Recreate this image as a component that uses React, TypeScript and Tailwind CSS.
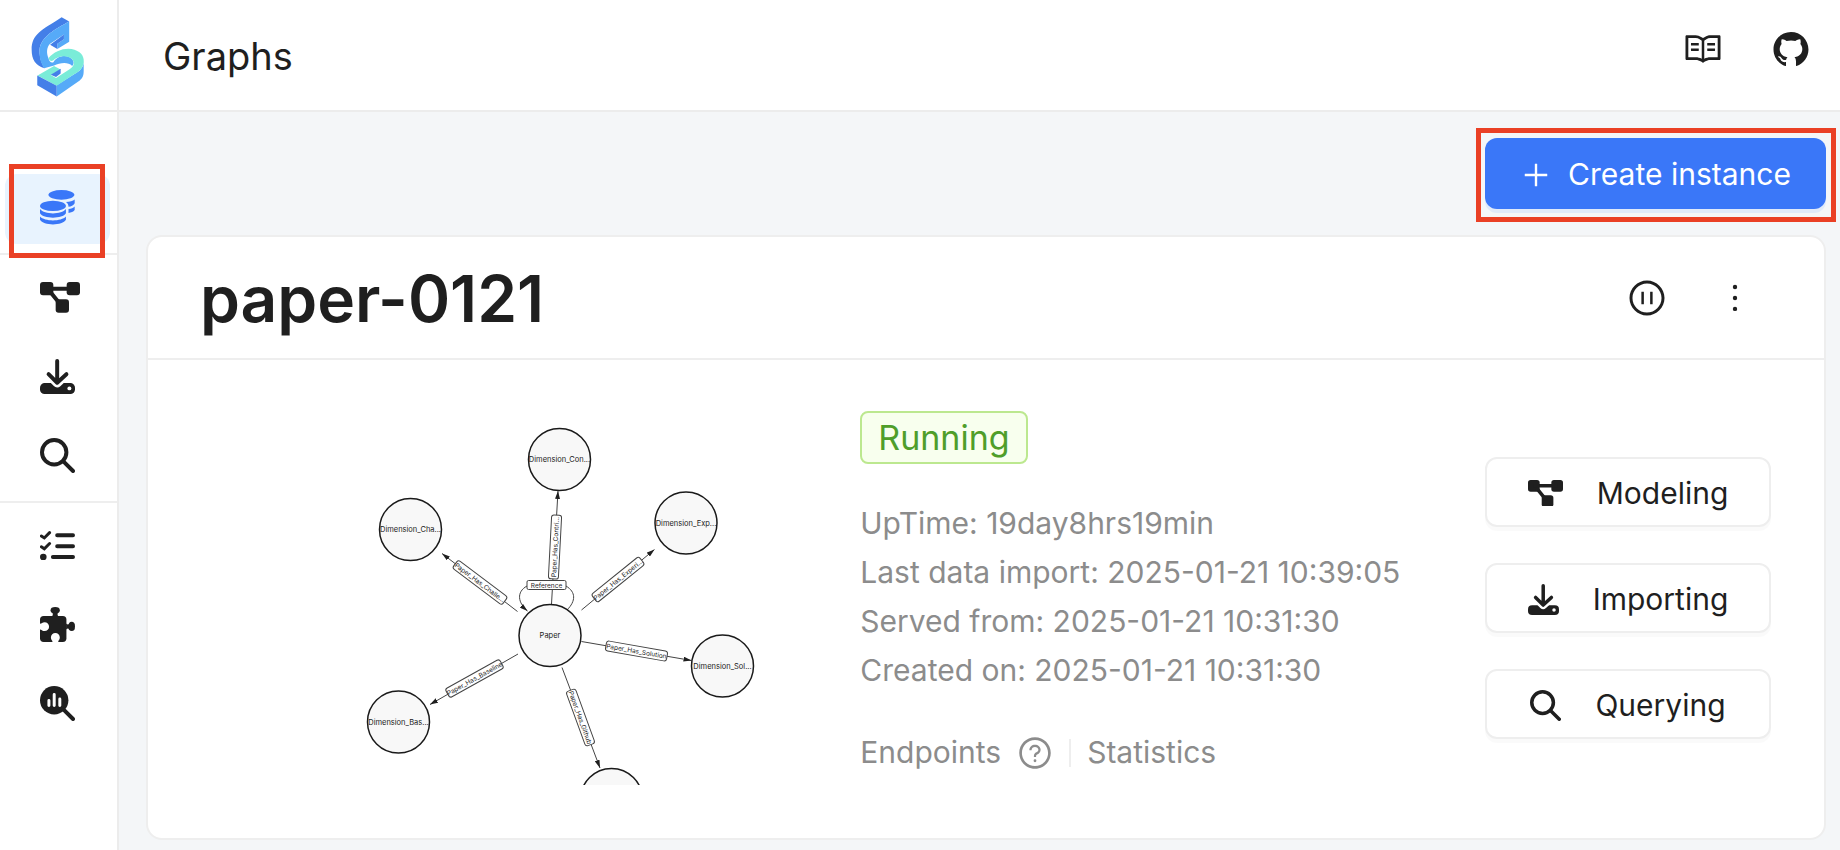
import type { ReactNode } from "react";
import {
  AiFillGithub,
  AiOutlineMore,
  AiOutlinePauseCircle,
  AiOutlinePlus,
  AiOutlineQuestionCircle,
  AiOutlineRead,
} from "react-icons/ai";

function Logo() {
  return (
    <svg viewBox="8 8 164 248" className="h-[82px] w-[54px]" aria-hidden="true">
      <path fill="#447fe8" d="M101 11 124 24 C85 45 37 70 34 110 C33 140 44 156 48 166 C22 158 10 140 10 110 C10 62 38 52 101 11Z" />
      <path fill="#56aaf8" d="M124 24V86L88 108V92L108 78V64L66 92C56 102 54 118 61 136C64 148 70 150 76 148C88 126 120 124 132 138C140 146 138 154 133 159C120 146 95 150 78 158L48 166C38 150 33 136 34 110C37 70 85 45 124 24Z" />
      <path fill="#447fe8" d="M108 64V78L88 92V108L66 95Z" />
      <path fill="#56aaf8" d="M86 218 140 184C158 175 168 162 168 146V174C168 190 164 197 156 203L86 252Z" />
      <path fill="#7aecd8" d="M61 136C80 112 115 102 140 110C165 118 170 136 168 150C164 170 150 178 140 184L86 219L28 188L78 159L98 170L68 187L84 196L124 170C140 160 142 148 132 138C118 124 88 128 75 143C68 146 64 142 61 136Z" />
      <path fill="#447fe8" d="M98 168V182L84 193L68 186ZM27 188 86 219V252L27 218Z" />
    </svg>
  );
}

function CoinsIcon({ className }: { className: string }) {
  return (
    <svg viewBox="0 0 108 108" className={className} fill="currentColor" aria-hidden="true">
      <ellipse cx="66" cy="15" rx="40" ry="15" />
      <ellipse cx="40" cy="49" rx="40" ry="16" />
      <path d="M0 59C14 77 66 77 80 59V72C70 90 10 90 0 72ZM0 82C14 98 66 98 80 82V92C70 111 10 111 0 92Z" />
      <path d="M80 37C92 36 102 34 107 29V41C103 48 96 51 88 52C88 46 86 41 80 37ZM88 59C96 58 103 55 107 51V62C103 68 96 70 88 71Z" />
    </svg>
  );
}

function ModelIcon({ className }: { className: string }) {
  return (
    <svg viewBox="0 0 120 92" className={className} fill="currentColor" aria-hidden="true">
      <rect width="40" height="40" rx="9" />
      <rect x="80" width="40" height="40" rx="9" />
      <rect x="47" y="52" width="40" height="40" rx="9" />
      <path d="M20 20H100M28 26 62 68" stroke="currentColor" strokeWidth="12" />
    </svg>
  );
}

function ImportIcon({ className }: { className: string }) {
  return (
    <svg viewBox="0 0 106 106" className={className} fill="none" strokeLinecap="round" strokeLinejoin="round" aria-hidden="true">
      <rect y="73" width="106" height="33" rx="14" fill="currentColor" />
      <path d="M26 46 52 72 80 46" stroke="white" strokeWidth="28" />
      <path d="M52 6V70M26 46 52 72 80 46" stroke="currentColor" strokeWidth="12" />
      <circle cx="89" cy="89" r="6" fill="white" />
    </svg>
  );
}

function SearchIcon({ className }: { className: string }) {
  return (
    <svg viewBox="0 0 106 106" className={className} fill="none" stroke="currentColor" strokeLinecap="round" aria-hidden="true">
      <circle cx="43" cy="43" r="37" strokeWidth="12" />
      <path d="M70 70 100 100" strokeWidth="12" />
    </svg>
  );
}

function TasksIcon({ className }: { className: string }) {
  return (
    <svg viewBox="0 0 106 88" className={className} fill="none" stroke="currentColor" strokeLinecap="round" aria-hidden="true">
      <path d="M52 13H100M52 46H100M39 79H100" strokeWidth="12" />
      <path d="M4 15 13 21 29 5M4 48 13 54 29 38" strokeWidth="9" />
      <circle cx="10" cy="79" r="10" fill="currentColor" stroke="none" />
    </svg>
  );
}

function PuzzleIcon({ className }: { className: string }) {
  return (
    <svg viewBox="0 0 106 106" className={className} fill="currentColor" aria-hidden="true">
      <rect y="27" width="80" height="79" rx="11" />
      <ellipse cx="46" cy="10" rx="14" ry="10" />
      <path d="M37 16H55C52 22 53 24 55 28H37C39 24 40 22 37 16ZM79 50C83 53 86 54 90 50V68C86 64 83 65 79 68Z" />
      <ellipse cx="96" cy="59" rx="10" ry="14" />
      <path fill="white" d="M-1 50C4 52 6 46 14 46A13 13 0 0 1 14 73C6 73 4 67 -1 68ZM37 107C40 102 33 100 33 92A13 13 0 0 1 60 92C60 100 53 102 56 107Z" />
    </svg>
  );
}

function AnalyticsIcon({ className }: { className: string }) {
  return (
    <svg viewBox="0 0 106 106" className={className} fill="none" strokeLinecap="round" aria-hidden="true">
      <circle cx="43" cy="43" r="43" fill="currentColor" />
      <path d="M70 70 100 100" stroke="currentColor" strokeWidth="12" />
      <path d="M27 44V59M43 26V59M60 39V59" stroke="white" strokeWidth="9" />
    </svg>
  );
}

const nodes = [
  { x: 439, y: 79, label: "Dimension_Con..." },
  { x: 141, y: 219, label: "Dimension_Cha..." },
  { x: 692, y: 206, label: "Dimension_Exp..." },
  { x: 765, y: 492, label: "Dimension_Sol..." },
  { x: 117, y: 604, label: "Dimension_Bas..." },
  { x: 543, y: 759, label: "Github" },
  { x: 420, y: 431, label: "Paper" },
];

const edges = [
  { d: "M423 368 436 142", x: 430, y: 254, angle: -87, length: 128, label: "Paper_Has_Contri..." },
  { d: "M483 380 629 259", x: 556, y: 319, angle: -39, length: 122, label: "Paper_Has_Experi..." },
  { d: "M355 383 204 267", x: 280, y: 325, angle: 37, length: 124, label: "Paper_Has_Challe..." },
  { d: "M356 468 180 569", x: 269, y: 517, angle: -29, length: 124, label: "Paper_Has_Baseline" },
  { d: "M483 443 703 481", x: 593, y: 462, angle: 10, length: 124, label: "Paper_Has_Solution" },
  { d: "M444 495 520 696", x: 481, y: 595, angle: 70, length: 116, label: "Paper_Has_Github" },
];

function SchemaGraph() {
  return (
    <svg viewBox="0 0 840 730" className="w-[420px] shrink-0 font-['Inter',sans-serif]" role="img" aria-label="Graph schema">
      <defs>
        <marker id="arrow" viewBox="0 0 16 10" refX="16" refY="5" markerWidth="16" markerHeight="10" markerUnits="userSpaceOnUse" orient="auto">
          <path d="M0 0 16 5 0 10Z" fill="#1f1f1f" />
        </marker>
      </defs>
      {edges.map((e) => (
        <g key={e.label}>
          <path d={e.d} fill="none" stroke="#444" strokeWidth="2" markerEnd="url(#arrow)" />
          <g transform={`translate(${e.x} ${e.y}) rotate(${e.angle})`}>
            <rect x={-e.length / 2} y="-10" width={e.length} height="20" rx="5" fill="white" stroke="#444" strokeWidth="2" />
            <text y="5" textAnchor="middle" fontSize="13" fill="#1f1f1f">{e.label}</text>
          </g>
        </g>
      ))}
      <path d="M374 332C352 344 356 366 375 382" fill="none" stroke="#444" strokeWidth="2" markerEnd="url(#arrow)" />
      <path d="M452 332C472 344 472 362 454 380" fill="none" stroke="#444" strokeWidth="2" />
      <rect x="374" y="321" width="78" height="18" rx="3" fill="white" stroke="#444" strokeWidth="2" />
      <text x="413" y="335" textAnchor="middle" fontSize="13" fill="#1f1f1f">Reference</text>
      {nodes.map((n) => (
        <g key={n.label}>
          <circle cx={n.x} cy={n.y} r="62" fill="#f8f8f8" stroke="#1a1a1a" strokeWidth="3" />
          {n.y < 730 && (
            <text x={n.x} y={n.y + 5} textAnchor="middle" fontSize="15" fill="#1a1a1a">{n.label}</text>
          )}
        </g>
      ))}
    </svg>
  );
}

function NavItem({ label, active, children }: { label: string; active?: boolean; children: ReactNode }) {
  return (
    <a
      href="#"
      aria-label={label}
      className={
        active
          ? "flex h-[70px] items-center rounded-xl bg-[#e8f3fe] pb-1 pl-[35px] text-[#3a77f8]"
          : "flex h-[70px] items-center rounded-xl pb-px pl-[35px]"
      }
    >
      {children}
    </a>
  );
}

function ActionButton({ label, children }: { label: string; children: ReactNode }) {
  return (
    <button
      type="button"
      className="flex h-[70px] w-full items-center justify-center gap-[34px] rounded-xl border-2 border-[#eeeeee] bg-white pt-0.5 text-[30px] shadow-[0_4px_0_rgba(0,0,0,0.02)]"
    >
      {children}
      {label}
    </button>
  );
}

const details = [
  "UpTime: 19day8hrs19min",
  "Last data import: 2025-01-21 10:39:05",
  "Served from: 2025-01-21 10:31:30",
  "Created on: 2025-01-21 10:31:30",
];

export default function App() {
  return (
    <div className="flex min-h-screen bg-[#f4f6f8] font-['Inter',sans-serif] text-[#1f1f1f]">
      <aside className="flex w-[119px] shrink-0 flex-col border-r-2 border-[#ececec] bg-white">
        <div className="flex h-28 items-center justify-center border-b-2 border-[#ececec] pt-1 pr-0.5">
          <Logo />
        </div>
        <nav className="flex flex-col pt-[62px]">
          <div className="relative border-b-2 border-[#eeeeee] pr-[7px] pb-[9px] pl-[5px]">
            <NavItem label="Graphs" active>
              <CoinsIcon className="w-[35px]" />
            </NavItem>
            <div className="pointer-events-none absolute -top-[10px] left-[9px] h-[94px] w-24 border-5 border-[#ea4025]" />
          </div>
          <div className="flex flex-col gap-[9px] border-b-2 border-[#eeeeee] px-[5px] pt-2 pb-[10px]">
            <NavItem label="Modeling">
              <ModelIcon className="w-10" />
            </NavItem>
            <NavItem label="Importing">
              <ImportIcon className="w-[35px]" />
            </NavItem>
            <NavItem label="Querying">
              <SearchIcon className="w-[35px]" />
            </NavItem>
          </div>
          <div className="flex flex-col gap-[9px] px-[5px] pt-2">
            <NavItem label="Jobs">
              <TasksIcon className="w-[35px]" />
            </NavItem>
            <NavItem label="Extensions">
              <PuzzleIcon className="w-[35px]" />
            </NavItem>
            <NavItem label="Analysis">
              <AnalyticsIcon className="w-[35px]" />
            </NavItem>
          </div>
        </nav>
      </aside>

      <div className="flex min-w-0 flex-1 flex-col">
        <header className="flex h-28 items-center justify-between border-b-2 border-[#ececec] bg-white pr-[29px] pl-11">
          <h1 className="pt-0.5 text-[38px]">Graphs</h1>
          <div className="flex items-center gap-12 pb-[13px]">
            <a href="#" aria-label="Documentation">
              <AiOutlineRead className="size-10" />
            </a>
            <a href="#" aria-label="GitHub">
              <AiFillGithub className="size-10" />
            </a>
          </div>
        </header>

        <main className="flex flex-col gap-[26px] pt-[26px] pr-[14px] pb-[10px] pl-7">
          <div className="relative self-end">
            <button
              type="button"
              className="flex h-[71px] w-[341px] items-center justify-center gap-4 rounded-xl bg-[#3a77f8] pt-0.5 text-[30px] text-white shadow-[0_4px_0_#e0eafa]"
            >
              <AiOutlinePlus className="size-8" />
              Create instance
            </button>
            <div className="pointer-events-none absolute -right-[10px] -left-[9px] -top-[10px] h-[94px] border-5 border-[#ea4025]" />
          </div>

          <section className="-ml-px rounded-2xl border-2 border-[#eeeeee] bg-white">
            <div className="flex h-[123px] items-center justify-between border-b-2 border-[#eeeeee] pr-[69px] pl-[52px]">
              <h2 className="pt-0.5 text-[64px] leading-none font-semibold">paper-0121</h2>
              <div className="flex items-center gap-12">
                <button type="button" aria-label="Pause">
                  <AiOutlinePauseCircle className="size-10" />
                </button>
                <button type="button" aria-label="More">
                  <AiOutlineMore className="size-10" />
                </button>
              </div>
            </div>

            <div className="flex h-[478px] items-start">
              <div className="flex w-[42.5%] justify-end pt-[60px] pr-[100px]">
                <SchemaGraph />
              </div>
              <div className="flex flex-1 flex-col items-start pt-[51px] text-[30px] text-[#8c8c8c]">
                <span className="flex h-[53px] items-center rounded-lg border-2 border-[#bce88f] bg-[#f8ffee] px-4 text-[34px] text-[#4f9e2a]">
                  Running
                </span>
                <ul className="mt-[35px] leading-[49px]">
                  {details.map((line) => (
                    <li key={line}>{line}</li>
                  ))}
                </ul>
                <div className="mt-[33px] flex h-[49px] items-center">
                  <span>Endpoints</span>
                  <AiOutlineQuestionCircle className="ml-4 size-9" />
                  <span className="mx-4 h-7 w-0.5 bg-[#eeeeee]" />
                  <a href="#">Statistics</a>
                </div>
              </div>
              <div className="mr-[53px] flex w-[286px] shrink-0 flex-col gap-9 pt-[97px]">
                <ActionButton label="Modeling">
                  <ModelIcon className="w-[35px]" />
                </ActionButton>
                <ActionButton label="Importing">
                  <ImportIcon className="w-[31px]" />
                </ActionButton>
                <ActionButton label="Querying">
                  <SearchIcon className="w-[31px]" />
                </ActionButton>
              </div>
            </div>
          </section>
        </main>
      </div>
    </div>
  );
}
